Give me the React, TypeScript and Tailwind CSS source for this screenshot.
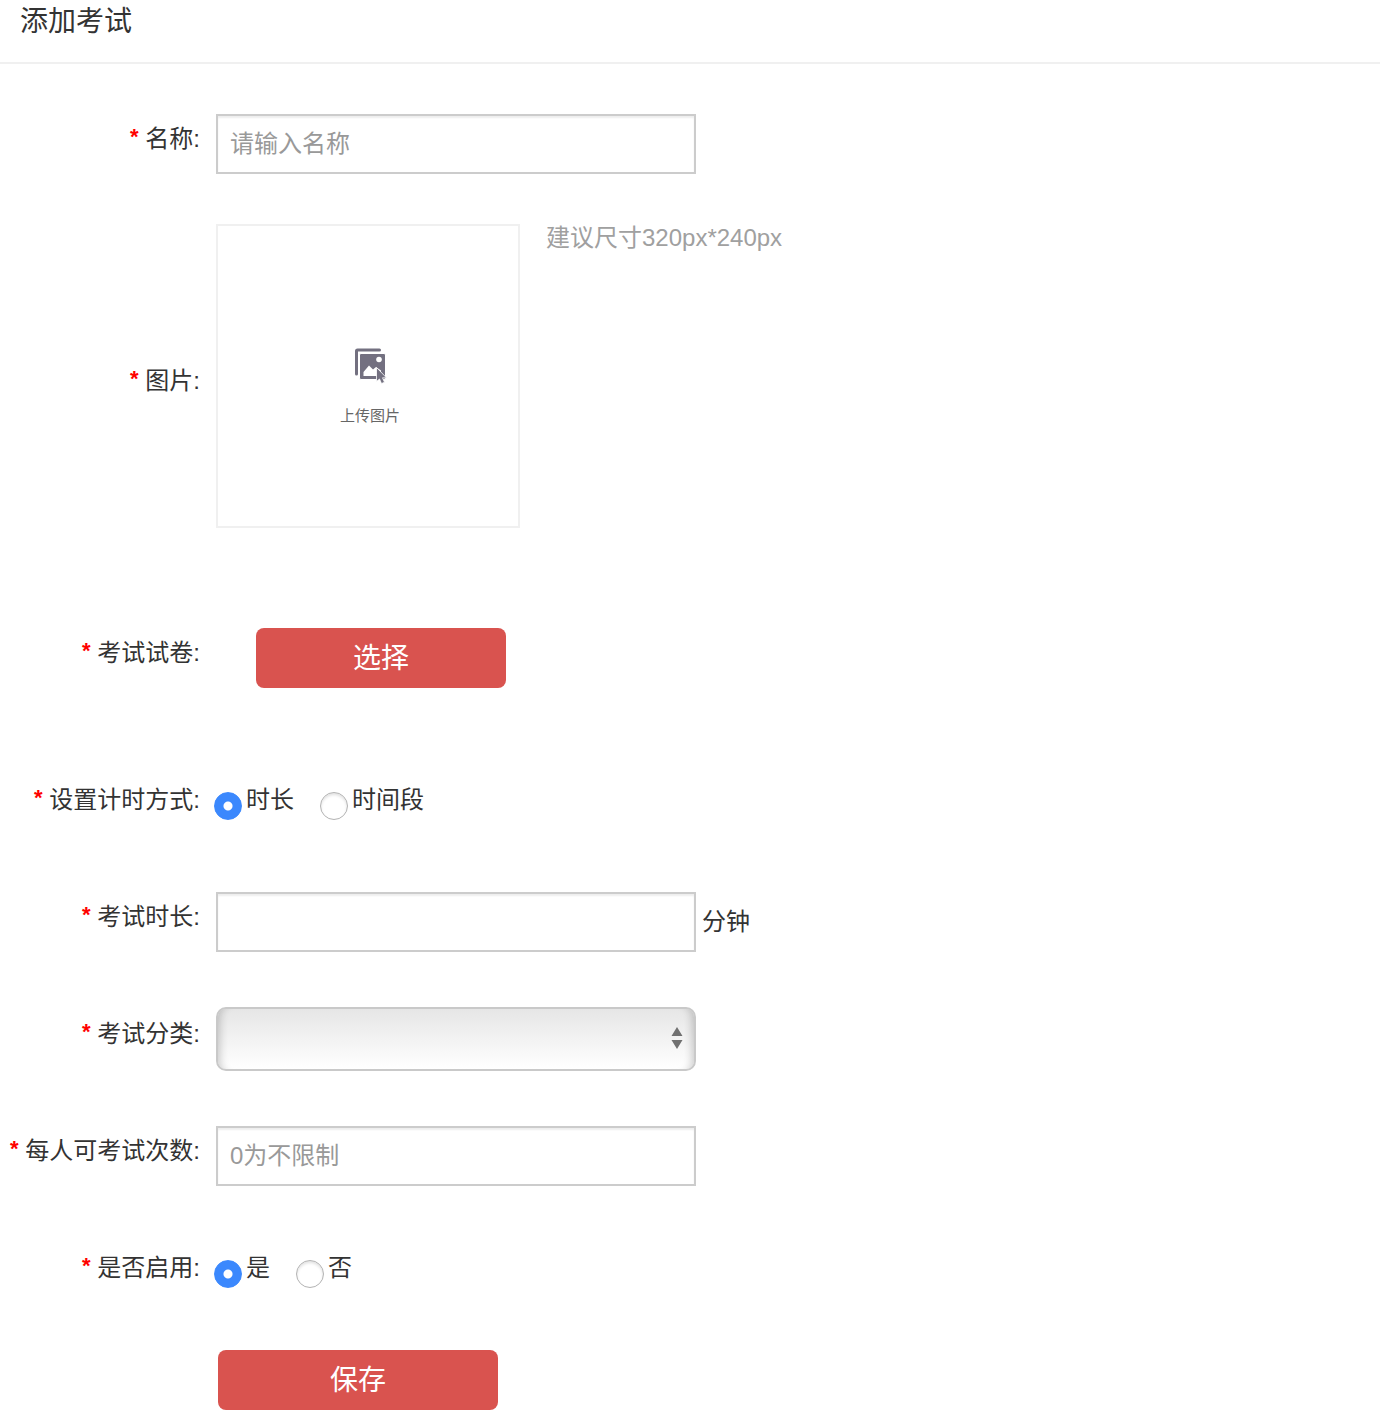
import { useState, type ReactNode } from "react";

const labelBase = "w-[200px] shrink-0 text-right whitespace-nowrap";

const inputBase =
  "h-[60px] w-[480px] min-w-0 border-2 border-[#ccc] bg-white px-3 text-2xl text-[#333] shadow-[inset_0_2px_2px_rgba(0,0,0,0.07)] outline-none placeholder:text-[#999] focus:border-[#999]";

const buttonBase = "h-[60px] rounded-lg bg-[#d9534f] pt-0.5 text-[28px] text-white";

function LabelText({ children }: { children: ReactNode }) {
  return (
    <>
      <span className="align-[3px] text-[22px] leading-none font-bold text-[#ff0000]">*</span>{" "}
      {children}:
    </>
  );
}

function Radio(props: {
  name: string;
  value: string;
  text: string;
  checked: boolean;
  onSelect: (value: string) => void;
}) {
  return (
    <label className="flex items-center gap-1">
      <input
        type="radio"
        name={props.name}
        value={props.value}
        checked={props.checked}
        onChange={() => props.onSelect(props.value)}
        className="mt-3 size-7 shrink-0 appearance-none rounded-full border border-[#b3b3b3] bg-white shadow-[inset_0_2px_3px_rgba(0,0,0,0.12)] checked:border-[#3b88fd] checked:bg-[radial-gradient(circle,#fff_4px,#3b88fd_5px)] checked:shadow-none"
      />
      <span>{props.text}</span>
    </label>
  );
}

function RadioRow(props: {
  name: string;
  title: string;
  options: string[];
  className: string;
}) {
  const [value, setValue] = useState(props.options[0]);
  return (
    <fieldset className={props.className}>
      <div
        role="radiogroup"
        aria-labelledby={props.name + "-title"}
        className="flex items-start gap-3.5 leading-[50px]"
      >
        <span id={props.name + "-title"} className={labelBase}>
          <LabelText>{props.title}</LabelText>
        </span>
        <div className="flex flex-wrap gap-x-[26px]">
          {props.options.map((o) => (
            <Radio
              key={o}
              name={props.name}
              value={o}
              text={o}
              checked={value === o}
              onSelect={setValue}
            />
          ))}
        </div>
      </div>
    </fieldset>
  );
}

function UploadIcon() {
  return (
    <svg width="34" height="38" viewBox="0 0 34 38" aria-hidden="true">
      <path
        d="M3.5 28V5a1 1 0 0 1 1-1H26.500"
        fill="none"
        stroke="#737080"
        strokeWidth="3"
        strokeLinecap="round"
      />
      <rect x="6.500" y="7.500" width="26" height="26" rx="1.500" fill="#737080" stroke="#fff" strokeWidth="1" />
      <path d="M10.500 30v-4l5.500-6.500 4 4 3-2.500 5 3.500v5.500z" fill="#fff" />
      <circle cx="26" cy="13.500" r="2.800" fill="#fff" />
      <path
        d="M23.500 21.500v14l3-2.500 2 4.500 3-1.200-2-4.500h4z"
        fill="#737080"
        stroke="#fff"
        strokeWidth="0.800"
      />
    </svg>
  );
}

export default function App() {
  return (
    <div className="bg-white pb-1.5 font-['Liberation_Sans','Noto_Sans_CJK_SC',sans-serif] text-2xl text-[#333]">
      <header className="border-b-2 border-[#f0f0f0] px-5 pb-[18px]">
        <h1 className="text-[28px] leading-11">添加考试</h1>
      </header>

      <form className="pt-[50px]" onSubmit={(e) => e.preventDefault()}>
        <div className="flex items-start gap-4">
          <label htmlFor="exam-name" className={labelBase + " leading-[50px]"}>
            <LabelText>名称</LabelText>
          </label>
          <input id="exam-name" type="text" placeholder="请输入名称" className={inputBase} />
        </div>

        <div className="mt-[50px] flex items-start gap-4">
          <span id="picture-title" className={labelBase + " self-center pt-2.5"}>
            <LabelText>图片</LabelText>
          </span>
          <button
            type="button"
            aria-describedby="picture-title"
            className="flex size-[304px] shrink-0 flex-col items-center justify-center gap-5 border-2 border-[#f0f0f0] pt-[22px] pl-1"
          >
            <UploadIcon />
            <span className="text-[15px] leading-6 text-[#666]">上传图片</span>
          </button>
          <p className="ml-2.5 leading-7 text-[#a0a0a0]">建议尺寸320px*240px</p>
        </div>

        <div className="mt-[100px] flex items-start gap-4">
          <span id="paper-title" className={labelBase + " leading-[50px]"}>
            <LabelText>考试试卷</LabelText>
          </span>
          <button
            type="button"
            aria-describedby="paper-title"
            className={buttonBase + " ml-10 w-[250px]"}
          >
            选择
          </button>
        </div>

        <RadioRow
          name="timing"
          title="设置计时方式"
          options={["时长", "时间段"]}
          className="mt-[87px]"
        />

        <div className="mt-[67px] flex items-start gap-4">
          <label htmlFor="duration" className={labelBase + " leading-[50px]"}>
            <LabelText>考试时长</LabelText>
          </label>
          <div className="flex min-w-0 items-center gap-1.5">
            <input id="duration" type="text" className={inputBase} />
            <span className="shrink-0">分钟</span>
          </div>
        </div>

        <div className="mt-[55px] flex items-start gap-4">
          <label htmlFor="category" className={labelBase + " leading-[54px]"}>
            <LabelText>考试分类</LabelText>
          </label>
          <div className="relative w-[480px] min-w-0">
            <select
              id="category"
              className="block h-16 w-full appearance-none rounded-[10px] border-2 border-[#c9c9c9] bg-linear-to-b from-[#e6e6e6] to-white px-3 shadow-[inset_10px_0_8px_-8px_rgba(0,0,0,0.2),inset_-10px_0_8px_-8px_rgba(0,0,0,0.2)] outline-none"
            >
              <option value="" aria-label="考试分类" />
            </select>
            <svg
              width="12"
              height="22"
              viewBox="0 0 12 22"
              aria-hidden="true"
              className="pointer-events-none absolute top-5 right-[13px]"
            >
              <path d="M6 0l5.500 9h-11zM6 22l5.500-9h-11z" fill="#707070" />
            </svg>
          </div>
        </div>

        <div className="mt-[55px] flex items-start gap-4">
          <label htmlFor="attempts" className={labelBase + " leading-[50px]"}>
            <LabelText>每人可考试次数</LabelText>
          </label>
          <input id="attempts" type="text" placeholder="0为不限制" className={inputBase} />
        </div>

        <RadioRow
          name="enabled"
          title="是否启用"
          options={["是", "否"]}
          className="mt-[57px]"
        />

        <div className="mt-[57px] pl-[218px]">
          <button type="submit" className={buttonBase + " w-[280px]"}>
            保存
          </button>
        </div>
      </form>
    </div>
  );
}
